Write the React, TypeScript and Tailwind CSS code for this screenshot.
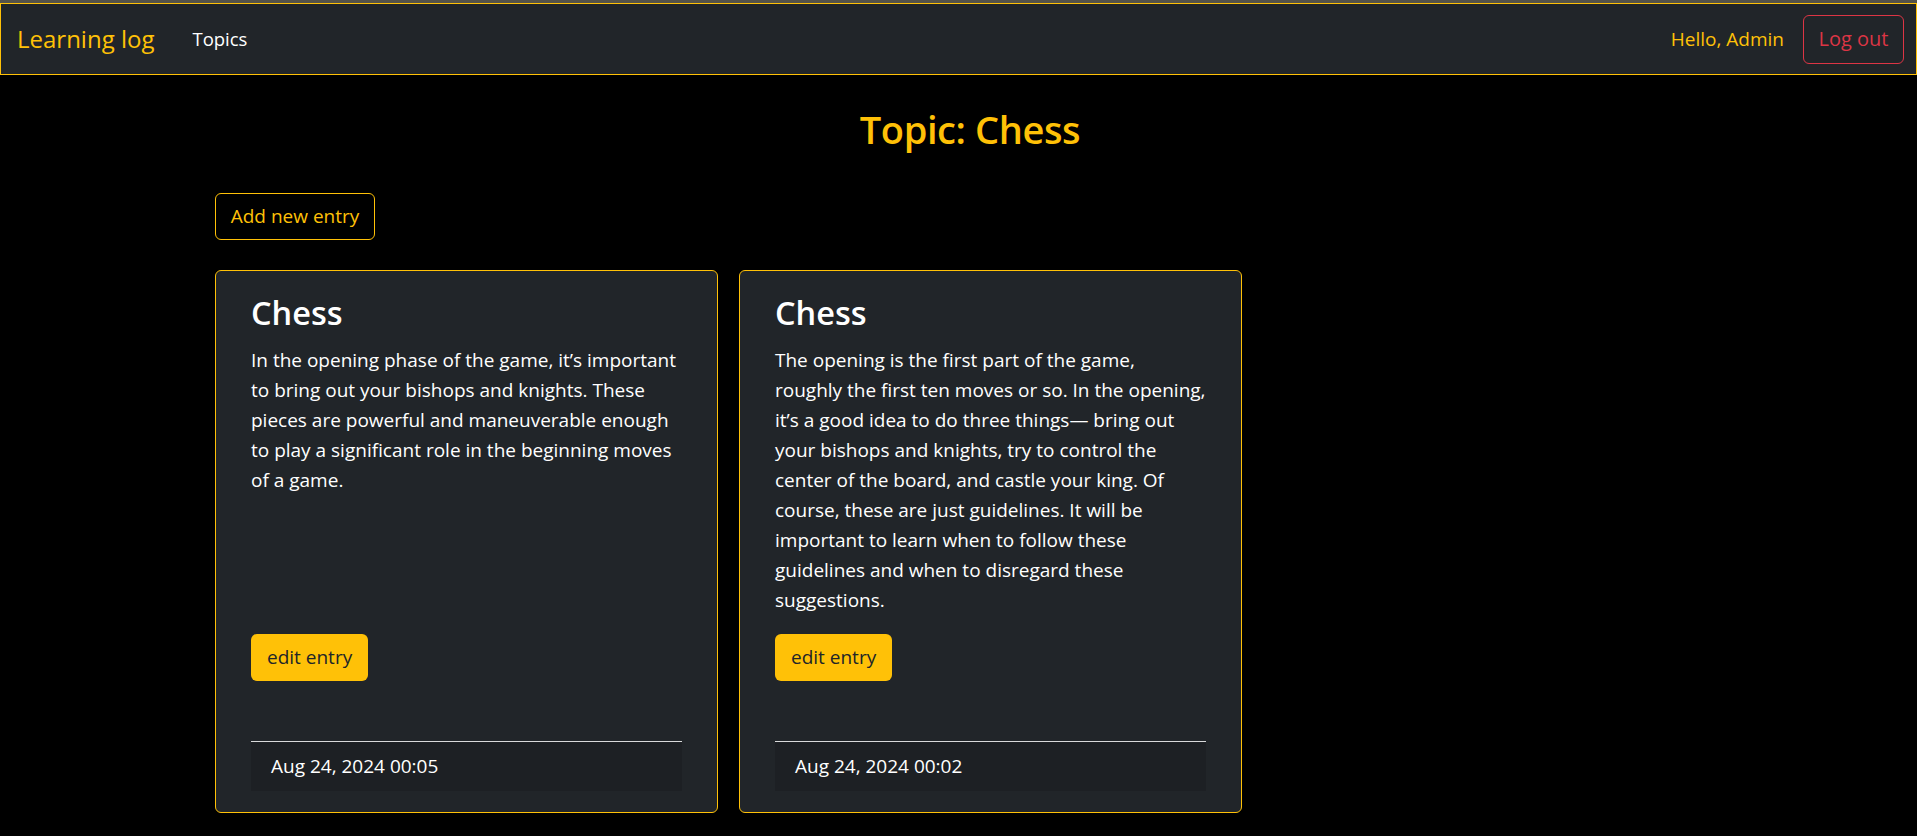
import React from "react";

const FONT = "font-['Segoe_UI','Open_Sans','Noto_Sans',sans-serif]";

type Entry = { text: string; date: string };

const entries: Entry[] = [
  {
    text: "In the opening phase of the game, it’s important to bring out your bishops and knights. These pieces are powerful and maneuverable enough to play a significant role in the beginning moves of a game.",
    date: "Aug 24, 2024 00:05",
  },
  {
    text: "The opening is the first part of the game, roughly the first ten moves or so. In the opening, it’s a good idea to do three things— bring out your bishops and knights, try to control the center of the board, and castle your king. Of course, these are just guidelines. It will be important to learn when to follow these guidelines and when to disregard these suggestions.",
    date: "Aug 24, 2024 00:02",
  },
];

function EntryCard({ entry }: { entry: Entry }) {
  return (
    <div className="w-[503px] flex flex-col rounded-md border border-[#ffc107] bg-[#212529] pt-5 pb-[21px]">
      <div className="px-[35px] flex flex-col flex-1">
        <h2 className="text-[32.5px] leading-[43px] font-semibold text-white mb-[11px]">Chess</h2>
        <p className="text-[19px] leading-[30px] text-white flex-1">{entry.text}</p>
        <div className="mt-[19px]">
          <button className="h-[47px] px-4 rounded-md bg-[#ffc107] text-[19px] text-[#212529]">edit entry</button>
        </div>
        <div className="mt-[60px] border-t border-[#d9dadb] bg-[#1d2024] py-[11px] pl-5">
          <span className="text-[19px] leading-[27px] text-white">{entry.date}</span>
        </div>
      </div>
    </div>
  );
}

export default function App() {
  return (
    <div className={`min-h-screen bg-black ${FONT}`}>
      <div className="h-[3px] bg-[#55534a]" />
      <nav className="h-[72px] border border-[#ffc107] bg-[#212529] flex items-center justify-between pl-4 pr-3">
        <div className="flex items-center">
          <span className="text-[24px] text-[#ffc107]">Learning log</span>
          <span className="ml-[38px] text-[18.5px] text-white">Topics</span>
        </div>
        <div className="flex items-center">
          <span className="text-[19px] text-[#ffc107]">Hello, Admin</span>
          <button className="ml-[19px] h-[49px] w-[101px] rounded-md border border-[#dc3545] text-[20px] text-[#dc3545]">Log out</button>
        </div>
      </nav>
      <main className="ml-[203px] w-[1534px] px-3">
        <h1 className="mt-[30px] text-center text-[38px] tracking-[-0.4px] leading-[48px] font-semibold text-[#ffc107]">Topic: Chess</h1>
        <div className="mt-[40px]">
          <button className="h-[47px] w-[160px] rounded-md border border-[#ffc107] text-[19px] text-[#ffc107]">Add new entry</button>
        </div>
        <div className="mt-[30px] flex items-stretch gap-[21px]">
          {entries.map((e, i) => (
            <EntryCard key={i} entry={e} />
          ))}
        </div>
      </main>
    </div>
  );
}
